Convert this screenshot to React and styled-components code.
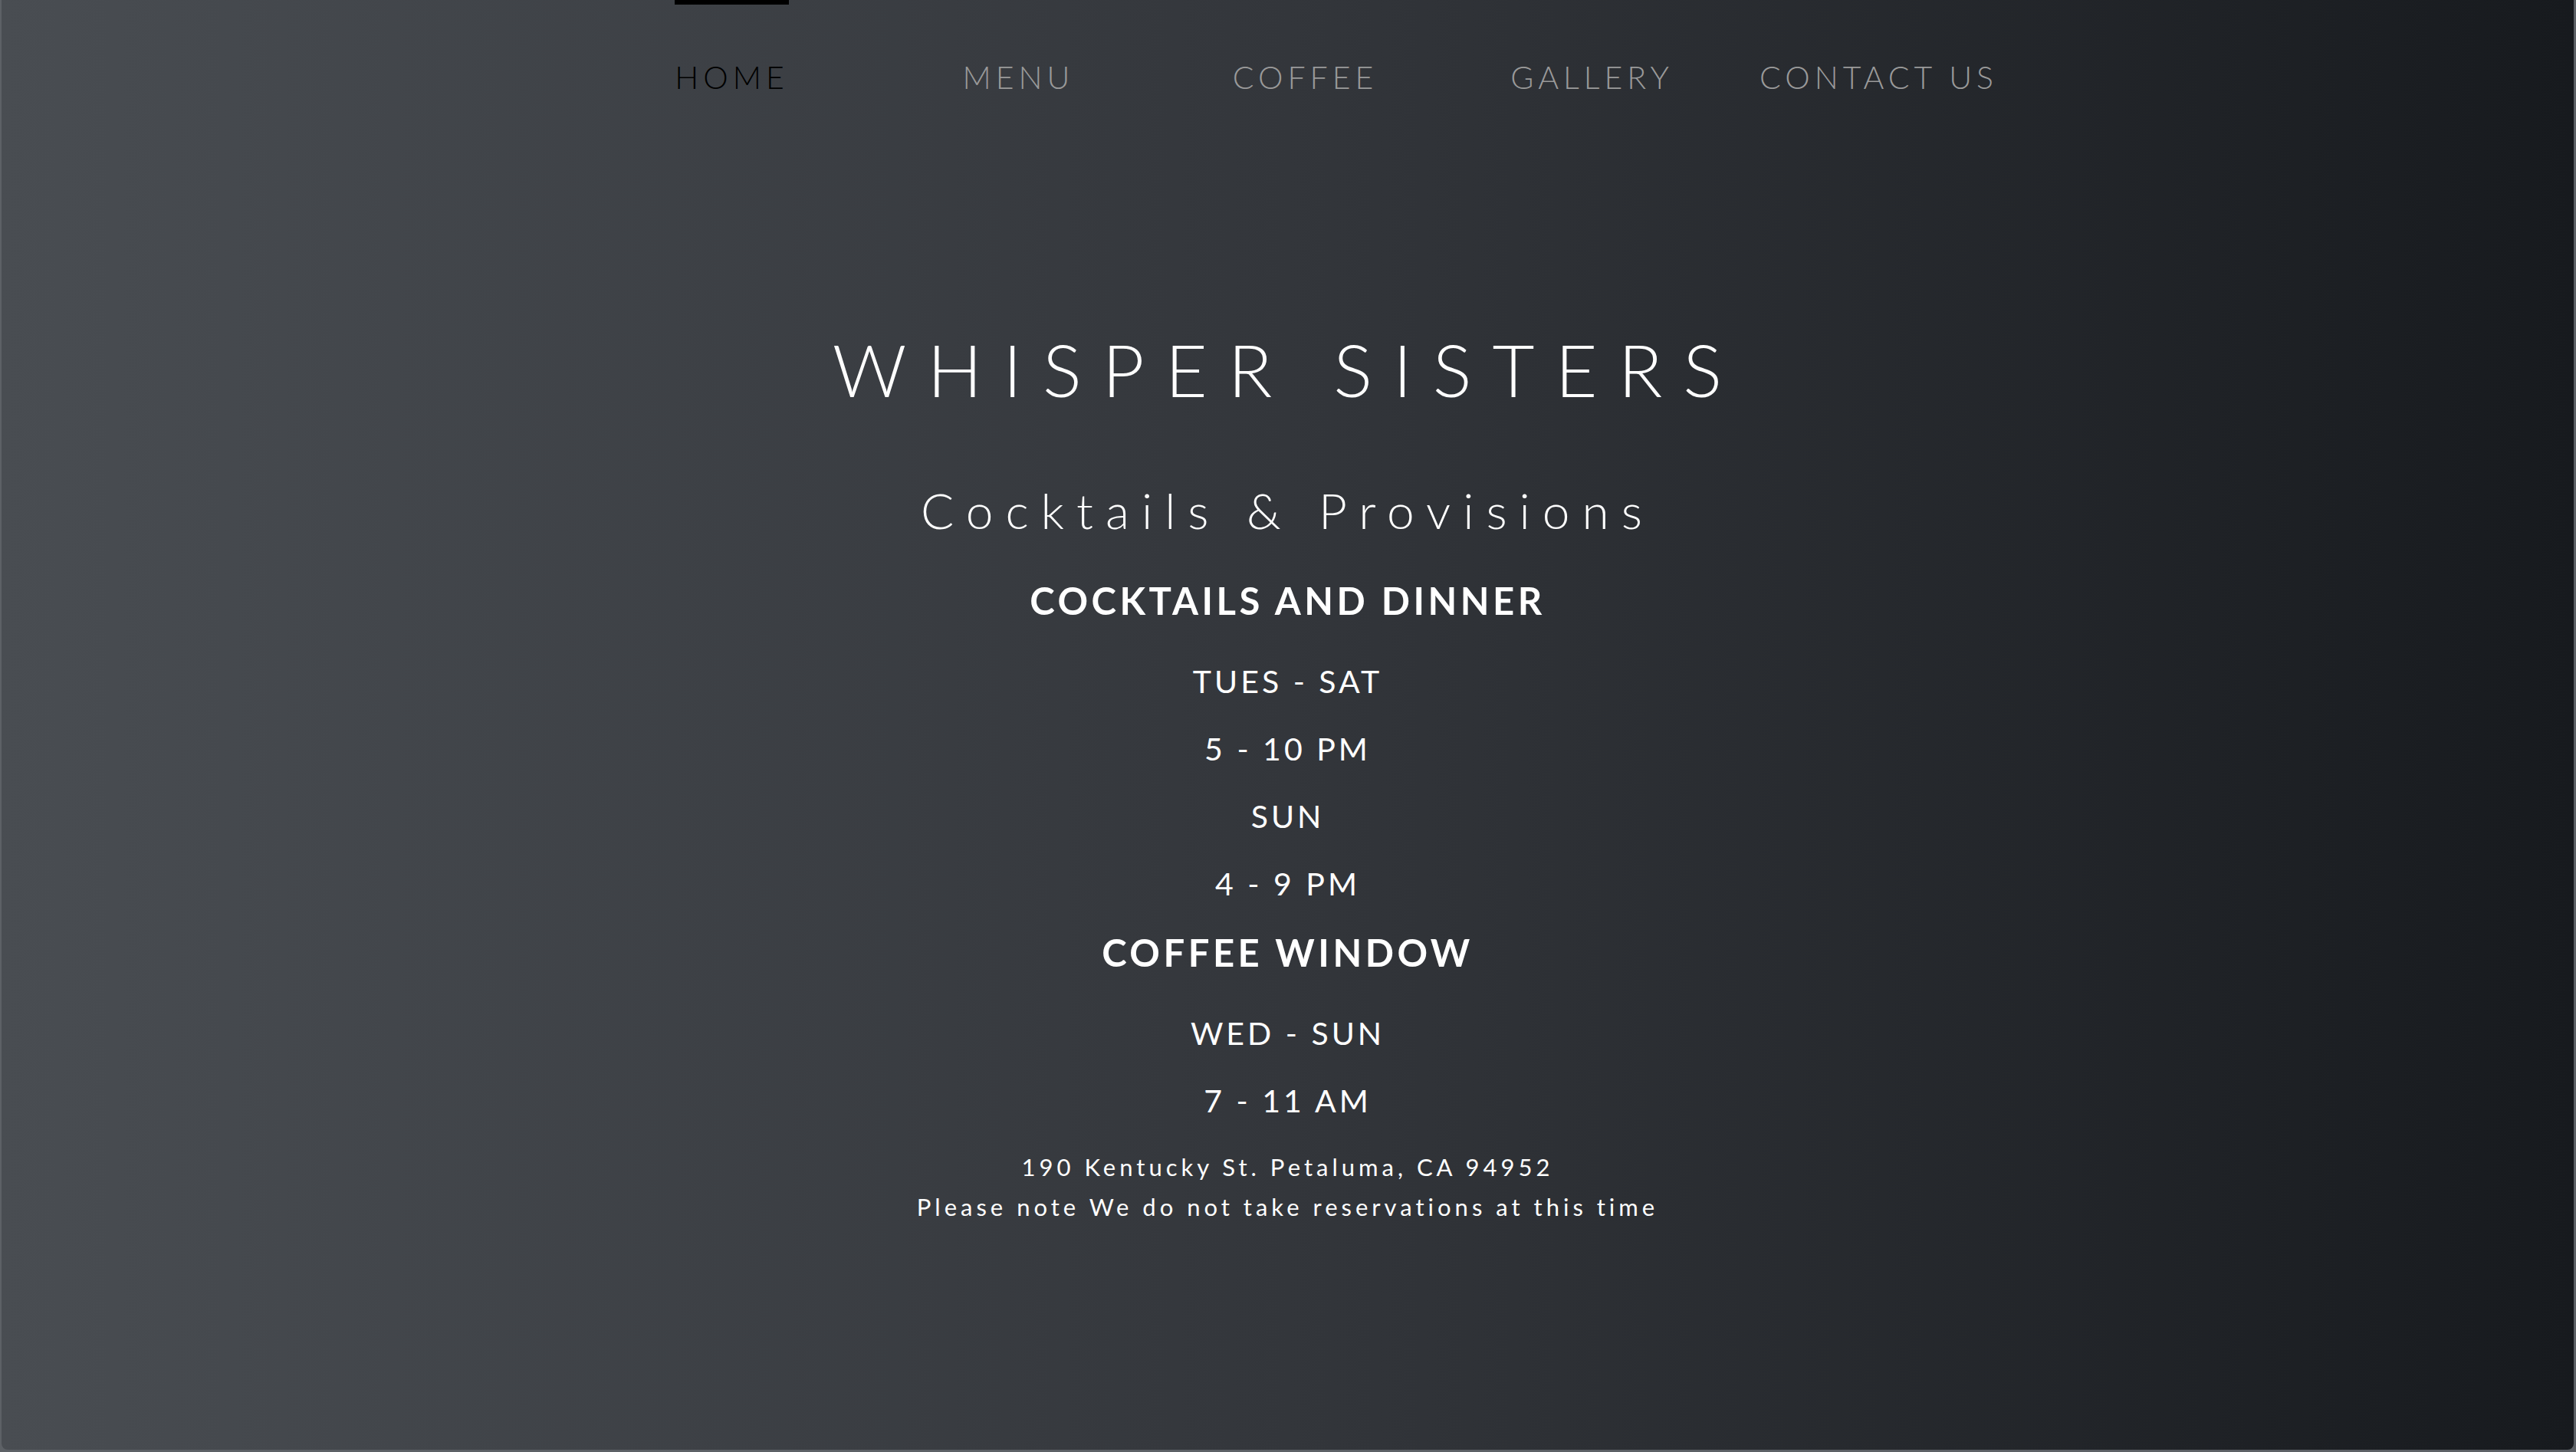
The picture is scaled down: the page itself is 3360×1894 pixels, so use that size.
import styled, { createGlobalStyle } from "styled-components";

const GlobalStyle = createGlobalStyle`
  html, body {
    margin: 0;
    padding: 0;
    background: #5d6166;
  }
  body {
    font-family: Lato, "Open Sans", "Liberation Sans", sans-serif;
  }
  * {
    box-sizing: border-box;
  }
`;

const Frame = styled.div`
  height: 100vh;
  padding: 0 3px 3px 2px;
`;

const Page = styled.div`
  height: 100%;
  border-radius: 0 0 8px 8px;
  background: linear-gradient(90deg, #494d52 0%, #33363b 50%, #171a1e 100%);
  display: flex;
  flex-direction: column;
  align-items: center;
  color: #fff;
  overflow: hidden;
`;

const Nav = styled.nav`
  display: flex;
  justify-content: center;
  padding-left: 46px;
`;

const NavItem = styled.div`
  width: 374px;
  text-align: center;
`;

const NavLink = styled.a`
  display: inline-block;
  border-top: 6px solid ${(p) => (p.$active ? "#000" : "transparent")};
  padding-top: 70px;
  font-size: 41px;
  font-weight: 300;
  line-height: 1.2;
  letter-spacing: 6px;
  color: ${(p) => (p.$active ? "#000" : "#9a9a9a")};
  text-decoration: none;
  cursor: pointer;
`;

const Main = styled.main`
  display: flex;
  flex-direction: column;
  align-items: center;
  text-align: center;
`;

const Title = styled.h1`
  margin: 299px 0 0;
  font-size: 95px;
  font-weight: 300;
  line-height: 1.2;
  letter-spacing: 27px;
`;

const Subtitle = styled.h2`
  margin: 90px 0 33px;
  font-size: 64px;
  font-weight: 300;
  line-height: 1.2;
  letter-spacing: 16px;
`;

const Heading = styled.h3`
  margin: 16px 0 32px;
  font-size: 49px;
  font-weight: 700;
  line-height: 1.2;
  letter-spacing: 4.5px;
`;

const Hours = styled.p`
  margin: 0;
  font-size: 41px;
  font-weight: 400;
  line-height: 88px;
  letter-spacing: 4px;
`;

const Address = styled.p`
  margin: 16px 0 0;
  font-size: 31px;
  font-weight: 400;
  line-height: 52px;
  letter-spacing: 5px;
`;

const links = ["HOME", "MENU", "COFFEE", "GALLERY", "CONTACT US"];

const schedule = [
  { title: "COCKTAILS AND DINNER", lines: ["TUES - SAT", "5 - 10 PM", "SUN", "4 - 9 PM"] },
  { title: "COFFEE WINDOW", lines: ["WED - SUN", "7 - 11 AM"] },
];

const App = () => {
  return (
    <>
      <GlobalStyle />
      <Frame>
        <Page>
          <Nav>
            {links.map((l, i) => (
              <NavItem key={l}>
                <NavLink $active={i === 0}>{l}</NavLink>
              </NavItem>
            ))}
          </Nav>
          <Main>
            <Title>WHISPER SISTERS</Title>
            <Subtitle>Cocktails &amp; Provisions</Subtitle>
            {schedule.map((s) => (
              <div key={s.title}>
                <Heading>{s.title}</Heading>
                {s.lines.map((line) => (
                  <Hours key={line}>{line}</Hours>
                ))}
              </div>
            ))}
            <Address>
              190 Kentucky St. Petaluma, CA 94952
              <br />
              Please note We do not take reservations at this time
            </Address>
          </Main>
        </Page>
      </Frame>
    </>
  );
};

export default App;
